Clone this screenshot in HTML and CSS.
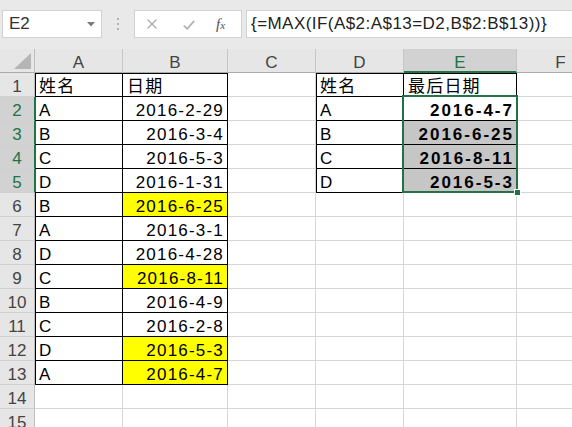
FILE: index.html
```html
<!DOCTYPE html>
<html lang="zh">
<head>
<meta charset="utf-8">
<title>Sheet</title>
<link rel="stylesheet" href="styles.css">
</head>
<body>
<div class="app">
  <div class="toolbar">
    <div class="namebox">
      <span class="ref">E2</span>
      <svg class="caret" width="8" height="5" viewBox="0 0 8 5"><path d="M0 0H8L4 4.5Z" fill="#7a7a7a"/></svg>
    </div>
    <div class="grip"><i></i><i></i><i></i></div>
    <div class="fxbtns">
      <svg class="ico-x" width="10" height="10" viewBox="0 0 10 10"><path d="M0.5 0.5L9.5 9.5M9.5 0.5L0.5 9.5" stroke="#ababab" stroke-width="1.3" fill="none"/></svg>
      <svg class="ico-ok" width="12" height="10" viewBox="0 0 12 10"><path d="M0.8 5.6L4.2 8.8L11.2 0.8" stroke="#b3b3b3" stroke-width="1.8" fill="none"/></svg>
      <span class="fx">f<small>x</small></span>
    </div>
    <div class="formula">{=MAX(IF(A$2:A$13=D2,B$2:B$13))}</div>
  </div>
  <div class="sheet">
    <div class="hd corner"><svg width="17" height="16" viewBox="0 0 17 16"><path d="M17 0V16H0Z" fill="#b5b5b5"/></svg></div>
    <div class="hd">A</div><div class="hd">B</div><div class="hd">C</div><div class="hd">D</div><div class="hd sel">E</div><div class="hd">F</div>

    <div class="rh">1</div><div class="c t tt tl">姓名</div><div class="c t tt">日期</div><div class="c"></div><div class="c t tt tl">姓名</div><div class="c t tt">最后日期</div><div class="c"></div>
    <div class="rh sel">2</div><div class="c t tg">A</div><div class="c t r">2016-2-29</div><div class="c"></div><div class="c t tl">A</div><div class="c t r b active">2016-4-7<span class="selbox"><span class="handle"></span></span></div><div class="c"></div>
    <div class="rh sel">3</div><div class="c t tg">B</div><div class="c t r">2016-3-4</div><div class="c"></div><div class="c t tl">B</div><div class="c t r b g">2016-6-25</div><div class="c"></div>
    <div class="rh sel">4</div><div class="c t tg">C</div><div class="c t r">2016-5-3</div><div class="c"></div><div class="c t tl">C</div><div class="c t r b g">2016-8-11</div><div class="c"></div>
    <div class="rh sel">5</div><div class="c t tg">D</div><div class="c t r">2016-1-31</div><div class="c"></div><div class="c t tl">D</div><div class="c t r b g">2016-5-3</div><div class="c"></div>
    <div class="rh">6</div><div class="c t tl">B</div><div class="c t r y">2016-6-25</div><div class="c"></div><div class="c"></div><div class="c"></div><div class="c"></div>
    <div class="rh">7</div><div class="c t tl">A</div><div class="c t r">2016-3-1</div><div class="c"></div><div class="c"></div><div class="c"></div><div class="c"></div>
    <div class="rh">8</div><div class="c t tl">D</div><div class="c t r">2016-4-28</div><div class="c"></div><div class="c"></div><div class="c"></div><div class="c"></div>
    <div class="rh">9</div><div class="c t tl">C</div><div class="c t r y">2016-8-11</div><div class="c"></div><div class="c"></div><div class="c"></div><div class="c"></div>
    <div class="rh">10</div><div class="c t tl">B</div><div class="c t r">2016-4-9</div><div class="c"></div><div class="c"></div><div class="c"></div><div class="c"></div>
    <div class="rh">11</div><div class="c t tl">C</div><div class="c t r">2016-2-8</div><div class="c"></div><div class="c"></div><div class="c"></div><div class="c"></div>
    <div class="rh">12</div><div class="c t tl">D</div><div class="c t r y">2016-5-3</div><div class="c"></div><div class="c"></div><div class="c"></div><div class="c"></div>
    <div class="rh">13</div><div class="c t tl">A</div><div class="c t r y">2016-4-7</div><div class="c"></div><div class="c"></div><div class="c"></div><div class="c"></div>
    <div class="rh">14</div><div class="c"></div><div class="c"></div><div class="c"></div><div class="c"></div><div class="c"></div><div class="c"></div>
    <div class="rh">15</div><div class="c"></div><div class="c"></div><div class="c"></div><div class="c"></div><div class="c"></div><div class="c"></div>
  </div>
</div>
</body>
</html>
```
FILE: styles.css
```css
* { box-sizing: border-box; }
html, body { margin: 0; padding: 0; background: #fff; }
body { width: 572px; height: 427px; overflow: hidden; font-family: "Liberation Sans", "Noto Sans CJK SC", sans-serif; }
.app { width: 572px; height: 427px; overflow: hidden; }

.toolbar {
  height: 49px;
  background: #e9e9e9;
  display: flex;
  align-items: flex-start;
  padding: 10px 0 0 2px;
}
.namebox {
  width: 100px; height: 28px;
  background: #fff;
  border: 1px solid #d3d3d3;
  display: flex; align-items: center;
  padding-left: 6px;
}
.namebox .ref { font-size: 17px; color: #333; flex: 1; }
.namebox .caret { margin-right: 6px; margin-top: 1px; }
.grip {
  width: 32px; height: 28px;
  display: flex; flex-direction: column; align-items: center; justify-content: center; gap: 3px;
}
.grip i { display: block; width: 2px; height: 2px; background: #b3b3b3; }
.fxbtns {
  width: 108px; height: 28px;
  background: #fff;
  border: 1px solid #d3d3d3;
  display: flex; align-items: center;
  padding-left: 12px;
}
.ico-x { margin-right: 26px; }
.ico-ok { margin-right: 21px; margin-top: 1px; }
.fx { font-family: "Liberation Serif", serif; font-style: italic; font-size: 15px; color: #505050; }
.fx small { font-size: 11px; }
.formula {
  flex: 1; height: 28px;
  margin-left: 4px;
  background: #fff;
  border: 1px solid #d3d3d3; border-right: none;
  padding: 3px 0 0 4px;
  font-size: 17px; letter-spacing: 0.45px; color: #222;
  line-height: 20px; white-space: nowrap;
}

.sheet {
  display: grid;
  grid-template-columns: 35px 88px 105px 88px 88px 113px 88px;
  grid-auto-rows: 24px;
  width: 572px;
  overflow: hidden;
}
.hd, .rh, .c {
  font-size: 17px;
  line-height: 18px;
  padding-top: 5px;
  white-space: nowrap;
  overflow: hidden;
}
.hd {
  background: #e6e6e6;
  color: #444;
  text-align: center;
  border-right: 1px solid #c6c6c6;
  border-bottom: 1px solid #ababab;
}
.hd.corner { display: flex; align-items: flex-end; justify-content: flex-end; padding: 0 3px 3px 0; border-right-color: #bdbdbd; }
.hd.sel { background: #d2d2d2; color: #217346; border-bottom: 2px solid #217346; }
.rh {
  background: #e6e6e6;
  color: #444;
  text-align: center;
  border-right: 1px solid #bdbdbd;
  border-bottom: 1px solid #d0d0d0;
}
.rh.sel { background: #d2d2d2; color: #217346; border-right-color: #217346; }

.c {
  color: #000;
  padding-left: 4px;
  padding-right: 3px;
  letter-spacing: 1.2px;
  border-right: 1px solid #d6d6d6;
  border-bottom: 1px solid #d6d6d6;
}
.c.t { border-right-color: #000; border-bottom-color: #000; }
.c.tt { box-shadow: inset 0 1px 0 #000; }
.c.tl { box-shadow: inset 1px 0 0 #000; }
.c.tt.tl { box-shadow: inset 1px 0 0 #000, inset 0 1px 0 #000; }
.c.tg { box-shadow: inset 1px 0 0 #217346; }
.c.r { text-align: right; }
.c.y { background: #ffff00; }
.c.b { font-weight: bold; letter-spacing: 2px; padding-right: 2px; }
.c.g { background: #c6c6c6; }

.c.active { position: relative; overflow: visible; z-index: 3; }
.selbox {
  position: absolute;
  left: -2px; top: -2px;
  width: 116px; height: 98px;
  border: 2px solid #217346;
  pointer-events: none;
}
.handle {
  position: absolute;
  right: -5px; bottom: -5px;
  width: 7px; height: 7px;
  background: #217346;
  border: 1px solid #fff;
}
```
